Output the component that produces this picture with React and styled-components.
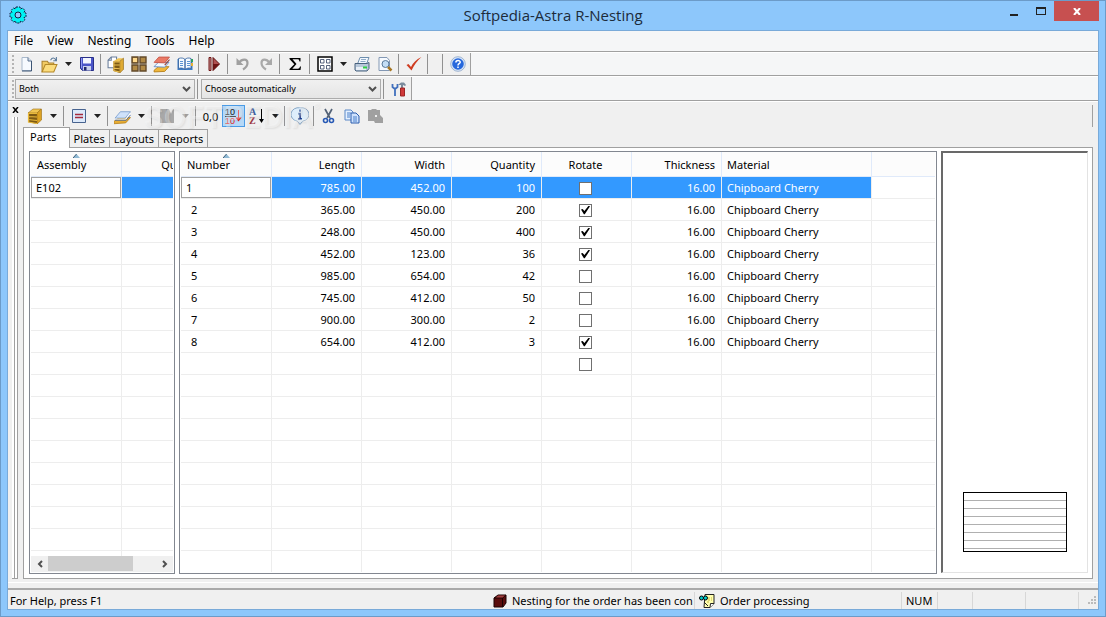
import React, { useState } from 'react'
import styled, { createGlobalStyle, css } from 'styled-components';

const GlobalStyle = createGlobalStyle`
  *, *::before, *::after {
    box-sizing: border-box;
  }
  body {
    margin: 0;
    overflow: hidden;
  }
  body, button, input, select {
    font-family: "Noto Sans", "Open Sans", sans-serif;
    font-size: 11px;
    color: #000;
  }
  button, input, select {
    margin: 0;
    padding: 0;
    border: 0;
    border-radius: 0;
    background: none;
  }
`
const Window = styled.div`
  display: flex;
  flex-direction: column;
  height: 100vh;
  padding: 0 6px 6px;
  border: 1px solid #6c9bc8;
  background-color: #8dc7fb;
`
const TitleBar = styled.header`
  display: grid;
  grid-template-columns: 1fr auto 1fr;
  height: 29px;
  flex: none;
  h1 {
    margin: 0;
    font-family: "Open Sans", sans-serif;
    font-size: 15px;
    line-height: 29px;
    font-weight: 400;
    color: #1c2b3a;
  }
`
const AppIcon = styled.svg`
  width: 18px;
  height: 18px;
  margin: 5px 0 0 2px;
`
const WindowButtons = styled.div`
  display: flex;
  justify-content: flex-end;
`
const WindowButton = styled.button`
  display: flex;
  width: ${props => props.$close ? '45px' : '27px'};
  height: 20px;
  align-items: center;
  justify-content: center;
  background-color: ${props => props.$close ? '#c75050' : 'transparent'};
`
const Client = styled.div`
  display: flex;
  flex: 1;
  flex-direction: column;
  min-height: 0;
  border: 1px solid #79aad9;
  background-color: #f0f0f0;
`
const MenuBar = styled.nav`
  display: flex;
  height: 21px;
  flex: none;
  padding-left: 6px;
  gap: 14px;
  background-color: #f5f6f7;
  border-bottom: 1px solid #a0a0a0;
  button {
    height: 20px;
    font-size: 12px;
    line-height: 20px;
  }
`
const Band = styled.div`
  display: flex;
  height: ${props => props.$last ? '25px' : '24px'};
  flex: none;
  background-color: #f5f6f7;
  border-top: 1px solid #fff;
  border-bottom: 1px solid #a0a0a0;
`
const Toolbar = styled.div`
  display: flex;
  align-items: center;
  padding: 0 1px 0 4px;
  background-color: #f0f0f0;
  border-right: 1px solid #a0a0a0;
`
const Grip = styled.span`
  width: 2px;
  height: 18px;
  margin-right: 1px;
  background: repeating-linear-gradient(#b4b4b4 0 2px, transparent 2px 4px);
`
const Tool = styled.button`
  display: flex;
  width: ${props => props.$w || 23}px;
  height: 22px;
  align-items: center;
  justify-content: center;
  flex: none;
  ${props => props.$active && css`
    border: 1px solid #4a9be6;
    background-color: #b5d8f7;
  `}
  svg {
    display: block;
    flex: none;
  }
`
const Separator = styled.span`
  width: 1px;
  height: 20px;
  margin-left: ${props => props.$before || 2}px;
  margin-right: 3px;
  flex: none;
  background-color: #919191;
`
const Combo = styled.div`
  position: relative;
  display: flex;
  width: 180px;
  height: 20px;
  select {
    width: 100%;
    padding: 0 20px 0 3px;
    border: 1px solid #acacac;
    background: linear-gradient(#f0f0f0, #e5e5e5);
    font-size: 9px;
    appearance: none;
  }
  svg {
    position: absolute;
    right: 4px;
    top: 7px;
    pointer-events: none;
  }
`
const Body = styled.main`
  display: flex;
  flex: 1;
  min-height: 0;
  padding: 3px 5px 3px 3px;
  border-top: 1px solid #fff;
`
const DockBar = styled.aside`
  display: flex;
  width: 12px;
  flex: none;
  flex-direction: column;
  align-items: center;
`
const DockClose = styled.button`
  display: flex;
  height: 12px;
  padding: 0 4px 2px 0;
  align-items: center;
`
const DockGrip = styled.div`
  width: 6px;
  flex: 1;
  margin-right: 4px;
  border-right: 1px solid #a0a0a0;
  border-bottom: 1px solid #a0a0a0;
  background: linear-gradient(90deg, #fff 0 2px, #a0a0a0 2px 3px, #fff 3px 5px);
`
const Workspace = styled.div`
  display: flex;
  flex: 1;
  flex-direction: column;
  min-width: 0;
`
const ViewTools = styled.div`
  position: relative;
  display: flex;
  height: 22px;
  flex: none;
  align-items: center;
  border-right: 1px solid #a0a0a0;
`
const Watermark = styled.div`
  position: absolute;
  left: 121px;
  top: -3px;
  font-family: Inter, sans-serif;
  font-size: 30px;
  line-height: 30px;
  font-weight: 600;
  color: rgba(255, 255, 255, 0.35);
  text-shadow: 1px 1px 2px rgba(0, 0, 0, 0.07);
  pointer-events: none;
  sup {
    font-size: 10px;
    line-height: 10px;
    vertical-align: top;
  }
`
const Tabs = styled.div`
  display: flex;
  height: 20px;
  flex: none;
  align-items: flex-end;
`
const Tab = styled.button`
  height: ${props => props.$active ? '21px' : '18px'};
  padding: ${props => props.$active ? '0 12px 2px 6px' : '0 4px'};
  margin-bottom: ${props => props.$active ? '-1px' : '0'};
  border: 1px solid #a0a0a0;
  border-bottom: 0;
  border-left-width: ${props => props.$active ? '1px' : '0'};
  background-color: ${props => props.$active ? '#fff' : '#f0f0f0'};
  line-height: 16px;
  z-index: ${props => props.$active ? 1 : 0};
`
const TabPage = styled.section`
  display: flex;
  flex: 1;
  min-height: 0;
  padding: 3px 4px 4px 5px;
  gap: 4px;
  border: 1px solid #a0a0a0;
  background-color: #fff;
`
const List = styled.div`
  display: flex;
  flex-direction: column;
  width: ${props => props.$w ? props.$w + 'px' : 'auto'};
  flex: ${props => props.$w ? 'none' : '1'};
  min-width: 0;
  padding: 0 1px 1px;
  border: 1px solid #828790;
  background-color: #fff;
  overflow: hidden;
`
const TableClip = styled.div`
  flex: 1;
  min-height: 0;
  overflow: hidden;
`
const Table = styled.table`
  width: ${props => props.$w ? props.$w + 'px' : '100%'};
  table-layout: fixed;
  border-collapse: separate;
  border-spacing: 0;
`
const Th = styled.th`
  height: 25px;
  padding: 1px ${props => props.$align === 'center' ? 7 : 6}px 0 5px;
  position: relative;
  border-right: 1px solid #e0eafa;
  border-bottom: 1px solid #e0eafa;
  background-color: #fcfcfc;
  font-weight: 400;
  text-align: ${props => props.$align || 'left'};
  &:first-child {
    padding-left: 6px;
  }
  &:last-child {
    border-right: 0;
  }
  svg {
    position: absolute;
    left: 50%;
    top: 2px;
    margin-left: -3px;
  }
`
const Td = styled.td`
  height: 22px;
  padding: ${props => props.$inset ? '0 10px' : '0 6px 0 5px'};
  border-right: 1px solid #ededed;
  border-bottom: 1px solid #ededed;
  line-height: 16px;
  white-space: nowrap;
  text-align: ${props => props.$align || 'left'};
  color: ${props => props.$selected ? '#fff' : '#000'};
  background-color: ${props => props.$selected ? '#3399ff' : 'transparent'};
  &:last-child {
    border-right: 0;
  }
`
const CheckCell = styled(Td)`
  padding: 0 7px 0 5px;
`
const EditCell = styled(Td)`
  padding: 0;
  background-color: #fff;
  input {
    display: block;
    width: 100%;
    height: 21px;
    padding: 0 4px;
    border: 1px solid #a0a0a0;
    background-color: #fff;
  }
`
const CheckBox = styled.input`
  appearance: none;
  display: block;
  width: 13px;
  height: 13px;
  margin: 1px auto 0;
  border: 1px solid #707070;
  background-color: #fff;
  &:checked::after {
    content: '';
    display: block;
    width: 9px;
    height: 9px;
    margin: 1px;
    background-color: #000;
    clip-path: polygon(0 45%, 18% 38%, 38% 62%, 84% 4%, 100% 8%, 42% 98%, 32% 98%);
  }
`
const ScrollBar = styled.div`
  display: flex;
  height: 16px;
  flex: none;
  background-color: #f0f0f0;
  button {
    width: 17px;
    display: flex;
    align-items: center;
    justify-content: center;
  }
`
const Track = styled.div`
  flex: 1;
`
const Thumb = styled.div`
  width: 79%;
  height: 15px;
  background-color: #cdcdcd;
`
const Preview = styled.div`
  display: flex;
  width: 147px;
  flex: none;
  align-items: flex-end;
  justify-content: center;
  padding-bottom: 20px;
  margin-bottom: 1px;
  border: 1px solid #e3e3e3;
  border-top: 2px solid #696969;
  border-left: 2px solid #696969;
  background-color: #fff;
`
const Sheet = styled.div`
  width: 104px;
  height: 60px;
  border: 1px solid #000;
  background: repeating-linear-gradient(#fff 0 7px, #b0b0b0 7px 8px);
`
const StatusBar = styled.footer`
  display: flex;
  height: 27px;
  flex: none;
  flex-direction: column;
  border-top: 1px solid #fff;
`
const StatusRow = styled.div`
  display: flex;
  flex: 1;
  margin-top: 5px;
  padding-left: 2px;
  border-top: 2px solid #a9a9a9;
  line-height: 17px;
`
const Pane = styled.div`
  display: flex;
  width: ${props => props.$w ? props.$w + 'px' : 'auto'};
  flex: ${props => props.$w ? 'none' : '1'};
  align-items: center;
  gap: 5px;
  margin-top: 2px;
  height: 17px;
  padding-left: ${props => props.$pad || 0}px;
  border-right: ${props => props.$line ? '1px solid #d7d7d7' : '0'};
  white-space: nowrap;
  overflow: hidden;
  svg {
    flex: none;
  }
`

const Icon = ({ size = 16, children }) => (
  <svg width={size} height={size} viewBox="0 0 16 16" fill="none" aria-hidden="true">{children}</svg>
)

const DropArrow = ({ dim }) => (
  <svg width="7" height="4" viewBox="0 0 7 4" aria-hidden="true"><path d="M0 0h7L3.500 4z" fill={dim ? '#a0a0a0' : '#222'} /></svg>
)

const ComboArrow = () => (
  <svg width="9" height="6" viewBox="0 0 9 6" aria-hidden="true"><path d="M1 1l3.500 3.500L8 1" stroke="#505050" strokeWidth="2" fill="none" /></svg>
)

const SortMark = () => (
  <svg width="7" height="4" viewBox="0 0 7 4" aria-hidden="true"><path d="M0 4L3.500 0 7 4z" fill="#8fb9d4" /><path d="M0 4L3.500 0" stroke="#3c5e78" /></svg>
)

const icons = {
  newFile: <Icon><path d="M3 1.500h6l3.500 3.500v9.500H3z" fill="#f6faff" stroke="#a9b9cc" /><path d="M9 1.500V5h3.500" fill="#cfdcec" stroke="#5c7290" /><path d="M12.500 5v10H3" stroke="#3c5474" /></Icon>,
  open: <Icon size={17}><path d="M1 15V5h5l1 1.500h5V9" fill="#f2cb63" stroke="#a9802c" /><path d="M1 15l3-7h11l-3 7z" fill="#fbdc7d" stroke="#b48828" /><path d="M9 4c1.500-3 4-2.500 5 0M14.500 1v3.500H11.500" stroke="#5e7c9c" /></Icon>,
  save: <Icon><path d="M1.500 1.500h13v13h-11l-2-2z" fill="#4a55c8" stroke="#282f88" /><path d="M4 2h8v5.500H4z" fill="#f2f5ff" /><path d="M4 10h8v4.500H4z" fill="#c9d1ec" /><path d="M5 11h2.500v3.500H5z" fill="#20286c" /><path d="M2.500 2v10" stroke="#8d98f4" /></Icon>,
  parts: <Icon size={17}><path d="M4 1h5v10H1V4z" fill="#fff" stroke="#6a7f9c" /><path d="M1 4h3V1" stroke="#6a7f9c" /><path d="M6 5l4.500-3H15l-3 3z" fill="#f0c552" /><path d="M6 5h6v11l-6-2z" fill="#7d5a14" /><path d="M12 5l3.500-3v10.500L12 16z" fill="#e0ab34" stroke="#936a14" strokeWidth=".6" /><path d="M6.500 5v9M6 5.500h6M7 8.500h5M7 11.500l5 .5M7 14l5 1" stroke="#ecbf50" /></Icon>,
  plates: <Icon><path d="M1 1h6v6H1zM9 1h6v6H9zM1 9h6v6H1zM9 9h6v6H9z" fill="#b18a46" stroke="#62492a" strokeWidth="1.400" /><path d="M2 2h4v4H2z" fill="#ffd98c" /></Icon>,
  layers: <Icon size={17}><path d="M1 13.500l4-3.500h10l-4 4.500-10 .5z" fill="#f0b73c" stroke="#b27c16" strokeWidth=".8" /><path d="M1 10l4-4h10l-4 4.500z" fill="#f4f8ff" stroke="#5a86c0" strokeWidth=".8" /><path d="M1 6l4.500-5h10L11 6.500z" fill="#ea7a66" stroke="#c55446" strokeWidth=".8" /><path d="M11 8.500l4.500-5" stroke="#933c32" /></Icon>,
  book: <Icon><path d="M.5 3h15v11H.5z" fill="#3e7cc4" /><path d="M1.500 2.500c3-1 5-.5 6.500 1v10c-2-1.500-4-2-6.500-1zM14 2.500c-2.500-1-4.500-.5-6 1v10c2-1.500 4-2 6-1z" fill="#f4faff" stroke="#2b5c9c" strokeWidth=".8" /><path d="M3 5.500h3M3 7.500h3M3 9.500h3M10 5.500h3M10 7.500h3M10 9.500h3" stroke="#5c94d4" /><path d="M15 3v3" stroke="#28a060" strokeWidth="2" /><path d="M15 7v3" stroke="#e8b032" strokeWidth="2" /></Icon>,
  run: <Icon><path d="M3 1.500h2v13H3z" fill="#c89090" stroke="#701515" /><path d="M7 1.500l6.500 6.500L7 14.500z" fill="#b05050" stroke="#601010" /><path d="M7 8h6.500L7 14.500z" fill="#6c1414" /></Icon>,
  undo: <Icon><path d="M1.500 2v7h7z" fill="#a0a0a0" /><path d="M4 6.500C7 2.500 12.500 2.500 12.500 7c0 3-2 5-4.500 6.500" stroke="#a0a0a0" strokeWidth="2.200" /></Icon>,
  redo: <Icon><path d="M14 2v7H7z" fill="#a9a9a9" /><path d="M11.500 6.500C8.500 2.500 3.500 2.500 3.500 7c0 3 2 5 4.500 6.500" stroke="#a9a9a9" strokeWidth="2.200" /></Icon>,
  sum: <Icon><path d="M2.500 2h11v3.500h-1c-.3-1.700-.8-2.200-2-2.200H5.500L9.500 8l-4.200 4.700h5.500c1.200 0 1.700-.5 2.200-2.200h1L13.500 14h-11v-1L7.300 8.200 2.500 3z" fill="#000" /></Icon>,
  grid: <Icon><path d="M1 1h14v14H1z" fill="#fff" stroke="#000" strokeWidth="1.500" /><path d="M3.500 3.500H7V7H3.500zM9.500 3.500H13V7H9.500zM3.500 9.500H7V13H3.500zM9.500 9.500H13V13H9.500z" stroke="#2e3e5e" strokeWidth=".8" /></Icon>,
  print: <Icon><path d="M6 1.500h9L12.500 8H3.500z" fill="#f4f9ff" stroke="#6d8eae" /><path d="M7 3.500h5M6.500 5.500h5" stroke="#91acc9" /><path d="M1 7.500h12l2-1v6l-2 2.500H2l-1-1z" fill="#b8c8da" stroke="#49627e" /><path d="M2 11h10v3H2z" fill="#e9eff6" /><path d="M9 10.500h4v2H9z" fill="#2ed045" /></Icon>,
  preview: <Icon><path d="M2 1.500h8l2.500 3v10H2z" fill="#f6faff" stroke="#8398b4" /><circle cx="8.500" cy="8" r="3.500" fill="#c4def5" stroke="#587999" /><path d="M11 11l3.500 3.500" stroke="#a67622" strokeWidth="2.500" /></Icon>,
  check: <Icon><path d="M.5 9l2-1L5 11c2-4 5-7.500 10.500-10C11 5 8 9 5.500 14.500z" fill="#cf3c20" /></Icon>,
  help: <Icon><circle cx="8" cy="8" r="7.300" fill="#dce8f8" stroke="#8aa4c8" strokeWidth=".8" /><circle cx="8" cy="8" r="5.800" fill="#2768dc" /><path d="M5.900 6.400C5.900 3.900 10.300 4 10.200 6.300 10.100 7.800 8 7.700 8 9.400M8 10.400v1.600" stroke="#fff" strokeWidth="1.500" /></Icon>,
  tools: <Icon><path d="M1.500 3v3L4 8l2.500-2V3M4 8v7" stroke="#4170bd" strokeWidth="1.800" /><path d="M7 4l3-2.500h3l2 2.500-1 1-2-1v3h-2V4z" fill="#7a8b9c" /><path d="M9.500 7h4v8h-4z" fill="#cf3838" stroke="#9c2424" /></Icon>,
  cabinet: <Icon><path d="M1 5l5-4h8l-4 4z" fill="#f0c552" stroke="#9a6d10" strokeWidth=".6" /><path d="M1 5h9v11l-9-2z" fill="#7d5a14" /><path d="M10 5l4.500-4v11L10 16z" fill="#dca223" stroke="#9a6d10" strokeWidth=".6" /><path d="M1.500 5v9.500M1 5.500h9M1 8.500l9 .5M1 11.500l9 1M1 14l9 1.500" stroke="#e9b93b" strokeWidth="1.200" /></Icon>,
  sheet: <Icon><path d="M1.500 1.500h13v13h-13z" fill="#dce9fa" stroke="#47638f" /><path d="M4 6.500h8M4 9.500h8" stroke="#a52a3c" strokeWidth="1.400" /></Icon>,
  plate: <Icon size={17}><path d="M0 12.500l5-3.500h10.500L11 14l-11 .8z" fill="#e8ad34" stroke="#b27c16" strokeWidth=".7" /><path d="M1 9.500l5-6h9.500l-5 6z" fill="#cfe2fb" stroke="#7b9ece" strokeWidth=".8" /><path d="M1 10.500h10l4.500-5.500" stroke="#fff" /><path d="M1 11.500h10.500l4-5" stroke="#3f64a2" strokeWidth=".8" /></Icon>,
  film: <Icon><path d="M1 1h14v14H1z" fill="#a8a8a8" /><path d="M10 1h4l-2 5z" fill="#eee" /><path d="M8 1v14" stroke="#909090" /></Icon>,
  order: (
    <svg width="17" height="18" viewBox="0 0 17 18" aria-hidden="true">
      <text x="0" y="8" fontSize="9" fill="#111" fontFamily="Liberation Sans, sans-serif">10</text>
      <path d="M0 9.500h11" stroke="#555" />
      <text x="0" y="17" fontSize="9" fill="#e32020" fontFamily="Liberation Sans, sans-serif">10</text>
      <path d="M13.500 3v11" stroke="#e32020" />
      <path d="M10.500 10.500h6l-3 4z" fill="#e32020" />
    </svg>
  ),
  sort: (
    <svg width="18" height="18" viewBox="0 0 18 18" aria-hidden="true">
      <text x="1" y="8" fontSize="10" fontWeight="700" fill="#3f5f9f" fontFamily="Liberation Serif, serif">A</text>
      <text x="1" y="17" fontSize="10" fontWeight="700" fill="#9e3544" fontFamily="Liberation Serif, serif">Z</text>
      <path d="M13.500 2v12" stroke="#000" />
      <path d="M11 12h5l-2.500 4z" fill="#000" />
    </svg>
  ),
  info: <Icon size={18}><path d="M8 .7a6.800 6 0 0 1 2.500 11.800L8 15.500l-2.500-3A6.800 6 0 0 1 8 .7z" fill="#deeefc" stroke="#7b9dc0" strokeWidth=".8" /><path d="M8 2.300v2M6.500 6H8v4.500M6.300 10.500h3.400" stroke="#123e94" strokeWidth="1.600" /></Icon>,
  cut: <Icon><path d="M4 1l5 9M11 1L6 10" stroke="#536277" strokeWidth="1.700" /><circle cx="4.500" cy="12.500" r="2" stroke="#2759b5" strokeWidth="1.600" /><circle cx="10.500" cy="12.500" r="2" stroke="#2759b5" strokeWidth="1.600" /></Icon>,
  copy: <Icon><path d="M1 2h6l2 2v8H1z" fill="#e4f0ff" stroke="#5b88c7" /><path d="M7 5h5l3 3v7H7z" fill="#cfe2fd" stroke="#2a5cad" /><path d="M3 5h4M3 7h3M3 9h3M9 9h4M9 11h4M9 13h4" stroke="#4a80ca" /></Icon>,
  paste: <Icon><path d="M1 2h3l1-1h4l1 1h3v5l3 3v5H8l-1-2H1z" fill="#a0a0a0" /><path d="M8 7h2v2H8z" fill="#eee" /></Icon>,
}

const parts = [
  { number: 1, length: '785.00', width: '452.00', quantity: 100, rotate: false },
  { number: 2, length: '365.00', width: '450.00', quantity: 200, rotate: true },
  { number: 3, length: '248.00', width: '450.00', quantity: 400, rotate: true },
  { number: 4, length: '452.00', width: '123.00', quantity: 36, rotate: true },
  { number: 5, length: '985.00', width: '654.00', quantity: 42, rotate: false },
  { number: 6, length: '745.00', width: '412.00', quantity: 50, rotate: false },
  { number: 7, length: '900.00', width: '300.00', quantity: 2, rotate: false },
  { number: 8, length: '654.00', width: '412.00', quantity: 3, rotate: true },
]

const emptyRows = (count) => Array.from({ length: count }, (_, i) => i)

const PartsTable = () => (
  <Table>
    <colgroup>
      <col style={{ width: 91 }} />
      {[90, 90, 90, 90, 90, 150].map((w, i) => <col key={i} style={{ width: w }} />)}
      <col />
    </colgroup>
    <thead>
      <tr>
        <Th>Number<SortMark /></Th>
        <Th $align="right">Length</Th>
        <Th $align="right">Width</Th>
        <Th $align="right">Quantity</Th>
        <Th $align="center">Rotate</Th>
        <Th $align="right">Thickness</Th>
        <Th>Material</Th>
        <Th />
      </tr>
    </thead>
    <tbody>
      {parts.map((part, ind) => {
        const selected = ind === 0
        return (
          <tr key={part.number}>
            {selected
              ? <EditCell><input aria-label="Number" defaultValue={part.number} /></EditCell>
              : <Td $inset>{part.number}</Td>}
            <Td $align="right" $selected={selected}>{part.length}</Td>
            <Td $align="right" $selected={selected}>{part.width}</Td>
            <Td $align="right" $selected={selected}>{part.quantity}</Td>
            <CheckCell $selected={selected}><CheckBox type="checkbox" aria-label={`Rotate ${part.number}`} defaultChecked={part.rotate} /></CheckCell>
            <Td $align="right" $selected={selected}>16.00</Td>
            <Td $selected={selected}>Chipboard Cherry</Td>
            <Td />
          </tr>
        )
      })}
      {emptyRows(10).map(row => (
        <tr key={row}>
          <Td /><Td /><Td /><Td />
          <CheckCell>{row === 0 && <CheckBox type="checkbox" aria-label="Rotate new part" />}</CheckCell>
          <Td /><Td /><Td />
        </tr>
      ))}
    </tbody>
  </Table>
)

const AssemblyTable = () => (
  <Table $w={181}>
    <colgroup>
      <col style={{ width: 91 }} />
      <col />
    </colgroup>
    <thead>
      <tr>
        <Th>Assembly<SortMark /></Th>
        <Th $align="right">Quantity</Th>
      </tr>
    </thead>
    <tbody>
      <tr>
        <EditCell><input aria-label="Assembly" defaultValue="E102" /></EditCell>
        <Td $selected />
      </tr>
      {emptyRows(17).map(row => <tr key={row}><Td /><Td /></tr>)}
    </tbody>
  </Table>
)

const App = () => {
  const [tab, setTab] = useState('Parts');

  return (
    <Window>
      <GlobalStyle />
      <TitleBar>
        <AppIcon viewBox="0 0 18 18" aria-hidden="true">
          <path d="M7 1h4l.5 2 2-1 2.500 2.500-1 2 2 .5v4l-2 .5 1 2-2.500 2.500-2-1-.5 2H7l-.5-2-2 1L2 13.500l1-2-2-.5V7l2-.5-1-2L4.500 2l2 1z" fill="#00f4f4" stroke="#124" strokeDasharray="2 1" />
          <circle cx="9" cy="9" r="3" fill="#8dc7fb" stroke="#124" />
        </AppIcon>
        <h1>Softpedia-Astra R-Nesting</h1>
        <WindowButtons>
          <WindowButton aria-label="Minimize"><svg width="8" height="10"><path d="M0 8h8v2H0z" fill="#222" /></svg></WindowButton>
          <WindowButton aria-label="Maximize"><svg width="10" height="8"><path d="M0 0h10v8H0zM1 2v5h8V2z" fill="#222" fillRule="evenodd" /></svg></WindowButton>
          <WindowButton $close aria-label="Close"><svg width="8" height="7"><path d="M1 0l6 7M7 0L1 7" stroke="#fff" strokeWidth="2" /></svg></WindowButton>
        </WindowButtons>
      </TitleBar>
      <Client>
        <MenuBar>
          {['File', 'View', 'Nesting', 'Tools', 'Help'].map(item => <button key={item}>{item}</button>)}
        </MenuBar>
        <Band>
          <Toolbar>
            <Grip />
            <Tool aria-label="New">{icons.newFile}</Tool>
            <Tool aria-label="Open">{icons.open}</Tool>
            <Tool $w={14} aria-label="Recent files"><DropArrow /></Tool>
            <Tool aria-label="Save">{icons.save}</Tool>
            <Separator />
            <Tool aria-label="Parts list">{icons.parts}</Tool>
            <Tool aria-label="Plates list">{icons.plates}</Tool>
            <Tool aria-label="Materials">{icons.layers}</Tool>
            <Tool aria-label="Library">{icons.book}</Tool>
            <Separator />
            <Tool aria-label="Run nesting">{icons.run}</Tool>
            <Separator />
            <Tool aria-label="Undo">{icons.undo}</Tool>
            <Tool aria-label="Redo">{icons.redo}</Tool>
            <Separator />
            <Tool aria-label="Totals">{icons.sum}</Tool>
            <Separator $before={3} />
            <Tool aria-label="Layout">{icons.grid}</Tool>
            <Tool $w={14} aria-label="Layout options"><DropArrow /></Tool>
            <Tool aria-label="Print">{icons.print}</Tool>
            <Tool aria-label="Print preview">{icons.preview}</Tool>
            <Separator />
            <Tool aria-label="Check">{icons.check}</Tool>
            <Separator />
            <Separator $before={11} />
            <Tool aria-label="Help">{icons.help}</Tool>
          </Toolbar>
        </Band>
        <Band $last>
          <Toolbar>
            <Grip />
            <Combo>
              <select aria-label="Direction"><option>Both</option></select>
              <ComboArrow />
            </Combo>
            <Separator />
            <Combo>
              <select aria-label="Method"><option>Choose automatically</option></select>
              <ComboArrow />
            </Combo>
            <Separator />
            <Tool aria-label="Settings">{icons.tools}</Tool>
          </Toolbar>
        </Band>
        <Body>
          <DockBar>
            <DockClose aria-label="Close panel"><svg width="7" height="6"><path d="M1 0l5 6M6 0L1 6" stroke="#000" strokeWidth="1.500" /></svg></DockClose>
            <DockGrip />
          </DockBar>
          <Workspace>
            <ViewTools>
              <Tool aria-label="Cabinet">{icons.cabinet}</Tool>
              <Tool $w={14} aria-label="Cabinet options"><DropArrow /></Tool>
              <Separator $before={3} />
              <Tool aria-label="Sheet">{icons.sheet}</Tool>
              <Tool $w={14} aria-label="Sheet options"><DropArrow /></Tool>
              <Separator $before={3} />
              <Tool aria-label="Plate">{icons.plate}</Tool>
              <Tool $w={14} aria-label="Plate options"><DropArrow /></Tool>
              <Separator $before={3} />
              <Tool aria-label="Film">{icons.film}</Tool>
              <Tool $w={14} aria-label="Film options"><DropArrow dim /></Tool>
              <Separator $before={3} />
              <Tool aria-label="Decimals">0,0</Tool>
              <Tool $active aria-label="Order">{icons.order}</Tool>
              <Tool aria-label="Sort">{icons.sort}</Tool>
              <Tool $w={14} aria-label="Sort options"><DropArrow /></Tool>
              <Separator />
              <Tool aria-label="Information">{icons.info}</Tool>
              <Separator />
              <Tool aria-label="Cut">{icons.cut}</Tool>
              <Tool aria-label="Copy">{icons.copy}</Tool>
              <Tool aria-label="Paste">{icons.paste}</Tool>
              <Watermark>SOFTPEDIA<sup>®</sup></Watermark>
            </ViewTools>
            <Tabs role="tablist">
              {['Parts', 'Plates', 'Layouts', 'Reports'].map(name => (
                <Tab key={name} role="tab" aria-selected={tab === name} $active={tab === name} onClick={() => setTab(name)}>{name}</Tab>
              ))}
            </Tabs>
            <TabPage>
              <List $w={146}>
                <TableClip><AssemblyTable /></TableClip>
                <ScrollBar>
                  <button aria-label="Scroll left"><svg width="6" height="8"><path d="M5 1L2 4l3 3" stroke="#505050" strokeWidth="2" fill="none" /></svg></button>
                  <Track><Thumb /></Track>
                  <button aria-label="Scroll right"><svg width="6" height="8"><path d="M1 1l3 3-3 3" stroke="#505050" strokeWidth="2" fill="none" /></svg></button>
                </ScrollBar>
              </List>
              <List>
                <TableClip><PartsTable /></TableClip>
              </List>
              <Preview><Sheet /></Preview>
            </TabPage>
          </Workspace>
        </Body>
        <StatusBar>
          <StatusRow>
            <Pane>For Help, press F1</Pane>
            <Pane $w={202} $line>
              <svg width="14" height="14" viewBox="0 0 14 14"><path d="M1 4l4-3h8v8l-3 4H1z" fill="#5a0c0c" stroke="#1c0202" /><path d="M1 4h8.500L13 1M9.500 4v9" stroke="#1c0202" fill="none" /><path d="M5 1.500h7L9.500 3.500H3z" fill="#a04040" /></svg>
              Nesting for the order has been con
            </Pane>
            <Pane $w={207} $pad={4} $line>
              <svg width="16" height="14" viewBox="0 0 16 14"><path d="M6 .5h9v9L11 13.500H5z" fill="#ffffb0" stroke="#222" /><path d="M15 9.500h-3.500l-.5 4" fill="#fff" stroke="#222" /><path d="M9 4h4M9 6h4M8 8h3" stroke="#c8b840" strokeDasharray="2 1" /><path d="M5 8l4 4" stroke="#222" /><circle cx="2.500" cy="4" r="2" fill="#0cc" stroke="#000" /><circle cx="6.500" cy="4" r="2" fill="#0cc" stroke="#000" /></svg>
              Order processing
            </Pane>
            <Pane $w={36} $pad={4} $line>NUM</Pane>
            <Pane $w={35} $line />
            <Pane $w={53} $line />
            <Pane $w={53} $line />
            <Pane $w={19} $pad={9}>
              <svg width="9" height="9"><path d="M6 0h2v2H6zM3 3h2v2H3zM6 3h2v2H6zM0 6h2v2H0zM3 6h2v2H3zM6 6h2v2H6z" fill="#bbb" /></svg>
            </Pane>
          </StatusRow>
        </StatusBar>
      </Client>
    </Window>
  )
}

export default App
